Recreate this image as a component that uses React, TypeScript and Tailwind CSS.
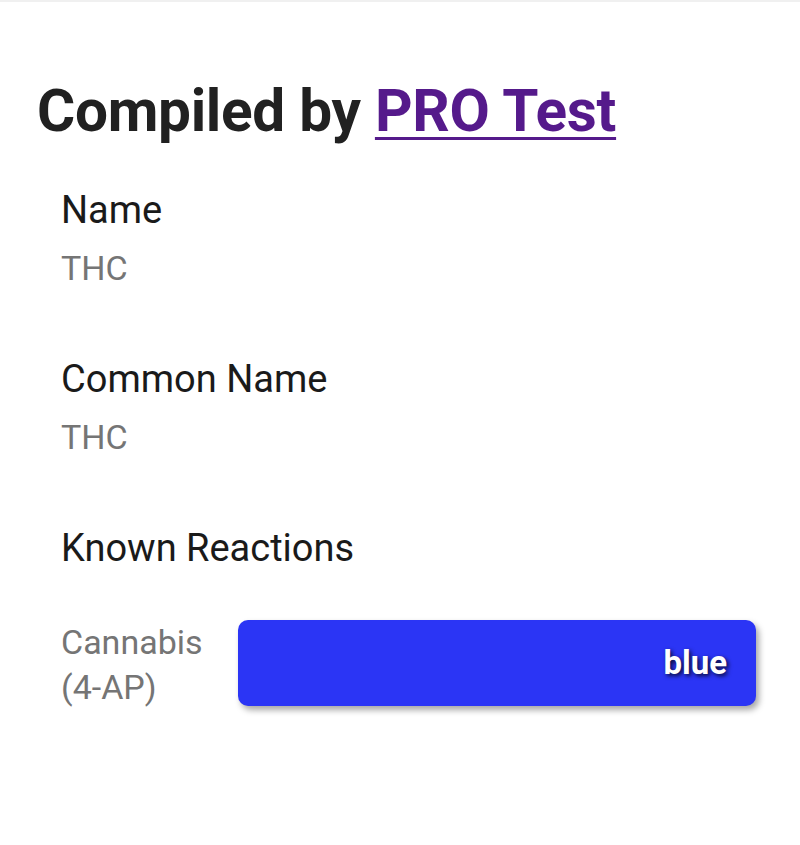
import React from 'react';

const fields = [
  { label: 'Name', value: 'THC' },
  { label: 'Common Name', value: 'THC' },
];

const reactions = [{ name: 'Cannabis (4-AP)', color: 'blue' }];

export default function App() {
  return (
    <div className="min-h-[845px] w-[800px] bg-white border-t-2 border-[#f0f0f0] font-['Roboto',sans-serif]">
      <div className="pl-[37px] pt-[74px]">
        <h1 className="text-[58.5px] font-bold leading-[70px] text-[#212121] tracking-[-0.3px]">
          Compiled by{' '}
          <a href="#" className="text-[#551a8b] underline decoration-[3px] underline-offset-[6px]">
            PRO Test
          </a>
        </h1>
      </div>

      <div className="pl-[61px] pr-[44px] pt-[42px]">
        {fields.map((f) => (
          <div key={f.label} className="h-[169px]">
            <div className="text-[38px] leading-[44px] text-[#1a1a1a]">{f.label}</div>
            <div className="mt-[14px] text-[34px] leading-[44px] text-[#757575]">{f.value}</div>
          </div>
        ))}

        <div className="text-[38px] leading-[44px] text-[#1a1a1a]">Known Reactions</div>
        {reactions.map((r) => (
          <div key={r.name} className="mt-[50px] flex items-start gap-[34px]">
            <div className="w-[143px] text-[34px] leading-[45px] text-[#757575]">{r.name}</div>
            <div className="flex h-[86px] flex-1 items-center justify-end rounded-[10px] bg-[#2b35f5] pr-[29px] shadow-[3px_4px_6px_rgba(0,0,0,0.35)]">
              <span className="text-[33px] font-bold text-white [text-shadow:2px_2px_4px_rgba(0,0,0,0.8)]">
                {r.color}
              </span>
            </div>
          </div>
        ))}
      </div>
    </div>
  );
}
